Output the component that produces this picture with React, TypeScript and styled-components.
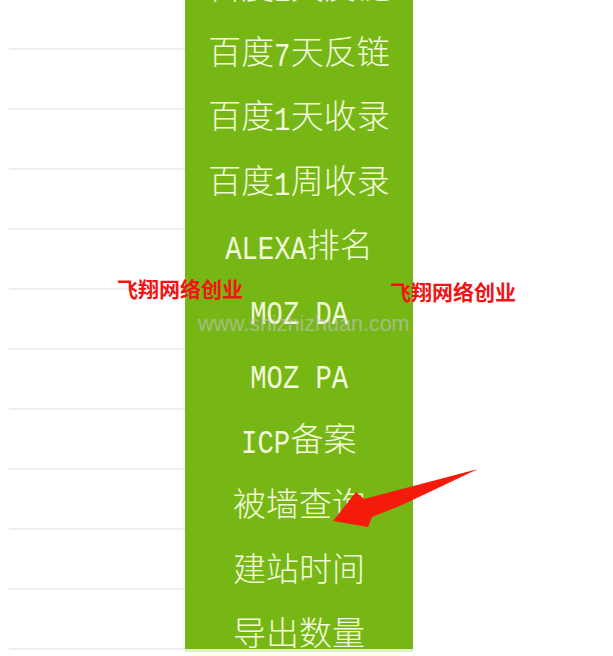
import styled, { createGlobalStyle } from "styled-components";

const Global = createGlobalStyle`
  html, body {
    margin: 0;
    padding: 0;
    background: #fff;
    overflow: hidden;
  }
`;

const Page = styled.div`
  position: relative;
  display: flex;
  width: 613px;
  height: 656px;
  overflow: hidden;
`;

const Lines = styled.div`
  display: flex;
  flex-direction: column;

  width: 176px;
  margin-left: 9px;
  padding-top: 48px;
`;

const Line = styled.div`
  height: 60px;
  flex-shrink: 0;
  box-sizing: border-box;
  border-top: 2px solid #efefef;
`;

const Menu = styled.ul`
  list-style: none;

  display: flex;
  flex-direction: column;
  align-self: flex-start;

  width: 228px;
  height: 695px;
  margin: -46px 0 0;
  padding: 0;

  background: #76b716;
  border-bottom: 3px solid #dff3c2;
`;

const Item = styled.li`
  height: 64.5px;
  flex-shrink: 0;

  display: flex;
  align-items: center;
  justify-content: center;

  color: #f3fbdc;
  font-family: "Noto Sans CJK SC", sans-serif;
  font-size: 33px;
  font-weight: 300;
`;

const Text = styled.span`
  white-space: pre;
  line-height: 40px;
`;

// narrow, tall latin glyphs like the bitmap font of the original
const LATIN_SIZE = 34;
const LATIN_SCALE = 0.8;

const Latin = styled.span<{ $n: number }>`
  display: inline-block;
  font-family: "Liberation Mono", monospace;
  font-size: ${LATIN_SIZE}px;
  line-height: 30px;
  transform: scaleX(${LATIN_SCALE});
  vertical-align: -2px;
  margin: 0
    ${(p) => (-p.$n * LATIN_SIZE * 0.6 * (1 - LATIN_SCALE)) / 2}px;
`;

const Mark = styled.div<{ $x: number; $y: number }>`
  position: absolute;
  left: ${(p) => p.$x}px;
  top: ${(p) => p.$y}px;

  color: #f21414;
  font-family: "Noto Sans CJK SC", sans-serif;
  font-size: 21px;
  font-weight: 700;
  line-height: 1;
`;

const Url = styled.div`
  position: absolute;
  left: 198px;
  top: 314px;

  color: rgba(195, 195, 195, 0.62);
  font-family: "Liberation Sans", Arial, sans-serif;
  font-size: 21.5px;
  line-height: 1;
`;

const Arrow = styled.svg`
  position: absolute;
  left: 0;
  top: 0;
`;

const items = [
  "百度1天反链",
  "百度7天反链",
  "百度1天收录",
  "百度1周收录",
  "ALEXA排名",
  "MOZ DA",
  "MOZ PA",
  "ICP备案",
  "被墙查询",
  "建站时间",
  "导出数量",
];

function Label({ text }: { text: string }) {
  return (
    <Text>
      {text.split(/([A-Za-z0-9 ]+)/).map((part, i) =>
        /[A-Za-z0-9]/.test(part) ? (
          <Latin key={i} $n={part.length}>
            {part}
          </Latin>
        ) : (
          part
        )
      )}
    </Text>
  );
}

export default function App() {
  return (
    <>
      <Global />
      <Page>
        <Lines>
          {Array.from({ length: 11 }).map((_, i) => (
            <Line key={i} />
          ))}
        </Lines>
        <Menu>
          {items.map((t) => (
            <Item key={t}>
              <Label text={t} />
            </Item>
          ))}
        </Menu>

        <Mark $x={117} $y={278}>飞翔网络创业</Mark>
        <Mark $x={390} $y={281}>飞翔网络创业</Mark>
        <Url>www.shizhizhuan.com</Url>

        <Arrow width="613" height="656" viewBox="0 0 613 656">
          <polygon
            points="333,521 356,492 364,499 478,469 402,505 372,517 368,527"
            fill="#f51a0c"
          />
        </Arrow>
      </Page>
    </>
  );
}
